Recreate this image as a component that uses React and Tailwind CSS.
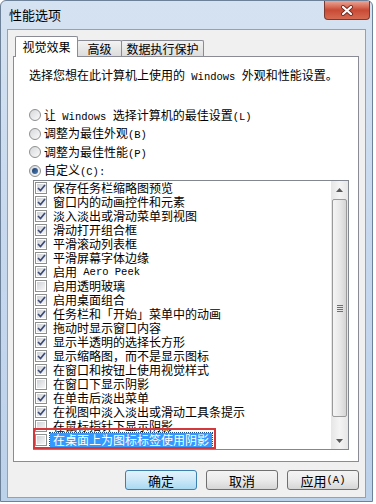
import React from "react";

const items = [
  ["保存任务栏缩略图预览", true],
  ["窗口内的动画控件和元素", true],
  ["淡入淡出或滑动菜单到视图", true],
  ["滑动打开组合框", true],
  ["平滑滚动列表框", true],
  ["平滑屏幕字体边缘", true],
  [["启用", " Aero Peek"], true],
  ["启用透明玻璃", false],
  ["启用桌面组合", true],
  ["任务栏和「开始」菜单中的动画", true],
  ["拖动时显示窗口内容", true],
  ["显示半透明的选择长方形", true],
  ["显示缩略图，而不是显示图标", true],
  ["在窗口和按钮上使用视觉样式", true],
  ["在窗口下显示阴影", false],
  ["在单击后淡出菜单", true],
  ["在视图中淡入淡出或滑动工具条提示", true],
  ["在鼠标指针下显示阴影", false],
  ["在桌面上为图标标签使用阴影", false, true],
];

function Lat({ children }) {
  return <span className="font-['Liberation_Mono',monospace] text-[10.5px] whitespace-pre">{children}</span>;
}

function Check({ checked }) {
  return (
    <span className="w-[12px] h-[12px] shrink-0 border border-[#8e8f8f] bg-white p-px flex">
      <span className="flex-1 flex items-center justify-center bg-gradient-to-br from-[#cfd2d6] to-[#f7f7f7]">
        {checked && (
          <svg width="9" height="8" viewBox="0 0 9 8">
            <path d="M1 4 L3.5 6.5 L8 1" stroke="#3b4a78" strokeWidth="1.7" fill="none" />
          </svg>
        )}
      </span>
    </span>
  );
}

function Radio({ on }) {
  return (
    <span className="w-[12px] h-[12px] shrink-0 rounded-full border border-[#8e8f8f] bg-gradient-to-br from-[#d6d8db] to-[#fafafa] flex items-center justify-center">
      {on && <span className="w-[6px] h-[6px] rounded-full bg-gradient-to-br from-[#1c3c6a] to-[#4d7fb5]" />}
    </span>
  );
}

function Btn({ children, def }) {
  return (
    <div
      className={
        "w-[72px] h-[20px] rounded-[3px] border flex items-center justify-center text-[13px] leading-none text-black " +
        (def
          ? "border-[#3c7fb1] bg-gradient-to-b from-[#e3f3fc] via-[#cbe8f8] to-[#a9d9f2]"
          : "border-[#707070] bg-gradient-to-b from-[#f4f4f4] via-[#ebebeb] to-[#d6d6d6]")
      }
    >
      {children}
    </div>
  );
}

export default function App() {
  return (
    <div className="w-[376px] h-[504px] bg-white relative overflow-hidden font-['Noto_Sans_CJK_SC',sans-serif] text-black">
      <div className="w-[373px] h-[502px] rounded-t-[6px] border border-[#6d8199] bg-gradient-to-b from-[#d5e2f1] via-[#c6d8ee] to-[#bcd1ea] flex flex-col">
        {/* title bar */}
        <div className="h-[28px] flex items-start justify-between shrink-0">
          <div className="pl-[8px] pt-[6px] text-[13px] leading-[16px] text-black">性能选项</div>
          <div className="mr-[2px] w-[46px] h-[19px] rounded-b-[4px] border border-t-0 border-[#7a3a32] bg-gradient-to-b from-[#eba596] via-[#c84a35] to-[#d66a52] flex items-center justify-center">
            <svg width="14" height="11" viewBox="0 0 14 11">
              <path d="M3 2 L11 9 M11 2 L3 9" stroke="#6e2a22" strokeWidth="4" strokeLinecap="round" />
              <path d="M3 2 L11 9 M11 2 L3 9" stroke="#ffffff" strokeWidth="2.2" strokeLinecap="round" />
            </svg>
          </div>
        </div>
        {/* content */}
        <div className="mx-[6px] h-[469px] border border-[#8ea2ba] bg-[#f0f0f0] pt-[6px] pl-[5px] pr-[6px] flex flex-col">
          {/* tabs */}
          <div className="flex items-end h-[20px] pl-[2px]">
            <div className="relative z-10 -mb-px h-[21px] w-[63px] border border-b-0 border-[#898c95] bg-white rounded-t-[2px] flex items-center justify-center text-[12px] leading-none">
              视觉效果
            </div>
            <div className="h-[16px] w-[45px] -ml-px border border-b-0 border-[#898c95] bg-gradient-to-b from-[#f3f3f3] to-[#dcdcdc] rounded-t-[2px] flex items-center justify-center text-[12px] leading-none">
              高级
            </div>
            <div className="h-[16px] w-[83px] -ml-px border border-b-0 border-[#898c95] bg-gradient-to-b from-[#f3f3f3] to-[#dcdcdc] rounded-t-[2px] flex items-center justify-center text-[12px] leading-none">
              数据执行保护
            </div>
          </div>
          {/* panel */}
          <div className="h-[406px] border border-[#898c95] bg-white pl-[15px] pt-[10px] flex flex-col">
            <div className="text-[12px] leading-[16px] whitespace-nowrap">
              选择您想在此计算机上使用的<Lat> Windows </Lat>外观和性能设置。
            </div>
            <div className="mt-[21px] flex flex-col">
              {[
                [<>让<Lat> Windows </Lat>选择计算机的最佳设置<Lat>(L)</Lat></>, false],
                [<>调整为最佳外观<Lat>(B)</Lat></>, false],
                [<>调整为最佳性能<Lat>(P)</Lat></>, false],
                [<>自定义<Lat>(C):</Lat></>, true],
              ].map(([t, on], i) => (
                <div key={i} className="h-[18.5px] flex items-center gap-[3px] text-[12px] leading-none whitespace-nowrap">
                  <Radio on={on} />
                  <span>{t}</span>
                </div>
              ))}
            </div>
            {/* listbox */}
            <div className="ml-[4px] w-[316px] h-[270px] border border-[#828790] bg-white flex">
              <div className="flex-1 flex flex-col">
                {items.map(([t, c, sel], i) => (
                  <div key={i} className="h-[14px] shrink-0 flex items-center pl-[1px] text-[12px] leading-[14px] whitespace-nowrap">
                    <Check checked={c} />
                    <span
                      className={
                        "ml-[3px] px-[3px] h-[14px] flex items-center " +
                        (sel ? "bg-[#3399ff] text-white outline outline-1 outline-dotted outline-[#1a4e8a]" : "")
                      }
                    >
                      {Array.isArray(t) ? (
                        <>
                          {t[0]}
                          <Lat>{t[1]}</Lat>
                        </>
                      ) : (
                        t
                      )}
                    </span>
                  </div>
                ))}
              </div>
              {/* scrollbar */}
              <div className="w-[17px] flex flex-col bg-gradient-to-r from-[#e6e6e6] via-[#f4f4f4] to-[#e6e6e6]">
                <div className="h-[18px] flex items-center justify-center">
                  <svg width="7" height="4" viewBox="0 0 7 4">
                    <path d="M0 4 L3.5 0 L7 4 Z" fill="#5a5a5a" />
                  </svg>
                </div>
                <div className="h-[218px] mx-px rounded-[2px] border border-[#9a9a9a] bg-gradient-to-r from-[#f5f5f5] via-[#e9e9e9] to-[#d5d5d5] flex items-center justify-center">
                  <div className="flex flex-col gap-[1px]">
                    <span className="w-[6px] h-px bg-[#6f6f6f]" />
                    <span className="w-[6px] h-px bg-[#6f6f6f]" />
                    <span className="w-[6px] h-px bg-[#6f6f6f]" />
                    <span className="w-[6px] h-px bg-[#6f6f6f]" />
                  </div>
                </div>
                <div className="flex-1" />
                <div className="h-[17px] flex items-center justify-center">
                  <svg width="7" height="4" viewBox="0 0 7 4">
                    <path d="M0 0 L7 0 L3.5 4 Z" fill="#5a5a5a" />
                  </svg>
                </div>
              </div>
            </div>
          </div>
          {/* buttons */}
          <div className="mt-[8px] flex justify-end gap-[9px]">
            <Btn def>确定</Btn>
            <Btn>取消</Btn>
            <Btn>
              应用<Lat>(A)</Lat>
            </Btn>
          </div>
        </div>
      </div>
      {/* red annotation box */}
      <div className="absolute left-[33px] top-[428px] w-[183px] h-[21px] border-2 border-[#d3383c] pointer-events-none" />
    </div>
  );
}
